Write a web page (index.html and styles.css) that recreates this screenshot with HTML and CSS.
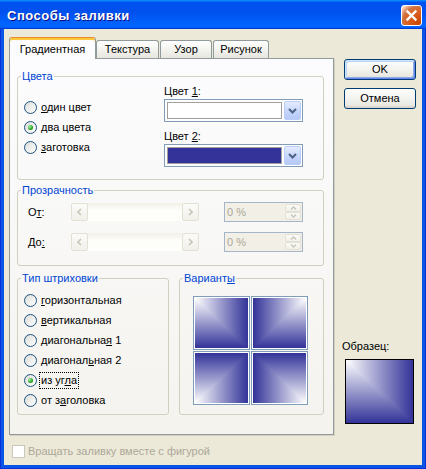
FILE: index.html
```html
<!DOCTYPE html>
<html lang="ru">
<head>
<meta charset="utf-8">
<title>Способы заливки</title>
<link rel="stylesheet" href="styles.css">
</head>
<body>
<div class="window">
  <div class="titlebar">
    <span class="title">Способы заливки</span>
    <span class="close"><svg width="21" height="21" viewBox="0 0 21 21"><path d="M6.5 6.5L14.5 14.5M14.5 6.5L6.5 14.5" stroke="#fff" stroke-width="2.4" stroke-linecap="square"/></svg></span>
  </div>
  <div class="frame">
    <div class="client">
      <div class="main">
        <div class="left">
          <div class="tabs">
            <div class="tab sel t1">Градиентная</div>
            <div class="tab t2">Текстура</div>
            <div class="tab t3">Узор</div>
            <div class="tab t4">Рисунок</div>
          </div>
          <div class="panel">
            <fieldset class="group g-colors">
              <legend>Цвета</legend>
              <div class="colors-body">
                <div class="radios">
                  <div class="radio-row r1"><span class="radio"></span><span class="lbl"><u>о</u>дин цвет</span></div>
                  <div class="radio-row"><span class="radio on"></span><span class="lbl"><u>д</u>ва цвета</span></div>
                  <div class="radio-row"><span class="radio"></span><span class="lbl"><u>з</u>аготовка</span></div>
                </div>
                <div class="pickers">
                  <div class="plabel">Цвет <u>1</u>:</div>
                  <div class="combo"><span class="swatch white"></span><span class="drop"><svg width="9" height="6" viewBox="0 0 9 6"><path d="M1 1L4.5 4.5L8 1" fill="none" stroke="#4D6185" stroke-width="2"/></svg></span></div>
                  <div class="plabel second">Цвет <u>2</u>:</div>
                  <div class="combo"><span class="swatch blue"></span><span class="drop"><svg width="9" height="6" viewBox="0 0 9 6"><path d="M1 1L4.5 4.5L8 1" fill="none" stroke="#4D6185" stroke-width="2"/></svg></span></div>
                </div>
              </div>
            </fieldset>
            <fieldset class="group g-trans">
              <legend>Прозрачность</legend>
              <div class="trow">
                <span class="tlabel">О<u>т</u>:</span>
                <div class="hscroll">
                  <span class="sbtn"><svg width="5" height="8" viewBox="0 0 5 8"><path d="M4 1L1 4L4 7" fill="none" stroke="#C8C6B8" stroke-width="1.6"/></svg></span>
                  <span class="strack"></span>
                  <span class="sbtn"><svg width="5" height="8" viewBox="0 0 5 8"><path d="M1 1L4 4L1 7" fill="none" stroke="#C8C6B8" stroke-width="1.6"/></svg></span>
                </div>
                <div class="spin">
                  <span class="spin-val">0 %</span>
                  <span class="spin-btns">
                    <span><svg width="7" height="4" viewBox="0 0 7 4"><path d="M1 3.5L3.5 1L6 3.5" fill="none" stroke="#C8C6B8" stroke-width="1.4"/></svg></span>
                    <span><svg width="7" height="4" viewBox="0 0 7 4"><path d="M1 0.5L3.5 3L6 0.5" fill="none" stroke="#C8C6B8" stroke-width="1.4"/></svg></span>
                  </span>
                </div>
              </div>
              <div class="trow second">
                <span class="tlabel">До<u>:</u></span>
                <div class="hscroll">
                  <span class="sbtn"><svg width="5" height="8" viewBox="0 0 5 8"><path d="M4 1L1 4L4 7" fill="none" stroke="#C8C6B8" stroke-width="1.6"/></svg></span>
                  <span class="strack"></span>
                  <span class="sbtn"><svg width="5" height="8" viewBox="0 0 5 8"><path d="M1 1L4 4L1 7" fill="none" stroke="#C8C6B8" stroke-width="1.6"/></svg></span>
                </div>
                <div class="spin">
                  <span class="spin-val">0 %</span>
                  <span class="spin-btns">
                    <span><svg width="7" height="4" viewBox="0 0 7 4"><path d="M1 3.5L3.5 1L6 3.5" fill="none" stroke="#C8C6B8" stroke-width="1.4"/></svg></span>
                    <span><svg width="7" height="4" viewBox="0 0 7 4"><path d="M1 0.5L3.5 3L6 0.5" fill="none" stroke="#C8C6B8" stroke-width="1.4"/></svg></span>
                  </span>
                </div>
              </div>
            </fieldset>
            <div class="bottom-row">
              <fieldset class="group g-hatch">
                <legend>Тип штриховки</legend>
                <div class="radio-row"><span class="radio"></span><span class="lbl"><u>г</u>оризонтальная</span></div>
                <div class="radio-row"><span class="radio"></span><span class="lbl"><u>в</u>ертикальная</span></div>
                <div class="radio-row"><span class="radio"></span><span class="lbl">диагональна<u>я</u> 1</span></div>
                <div class="radio-row"><span class="radio"></span><span class="lbl">диагонал<u>ь</u>ная 2</span></div>
                <div class="radio-row"><span class="radio on"></span><span class="lbl focus">из уг<u>л</u>а</span></div>
                <div class="radio-row"><span class="radio"></span><span class="lbl">от з<u>а</u>головка</span></div>
              </fieldset>
              <fieldset class="group g-var">
                <legend>Вариант<u>ы</u></legend>
                <div class="tiles">
                  <div class="tile"><svg width="53" height="50" viewBox="0 0 1 1" preserveAspectRatio="none"><defs><linearGradient id="h1" x1="0" y1="0" x2="1" y2="0"><stop offset="0" stop-color="#fff"/><stop offset="1" stop-color="#333399"/></linearGradient><linearGradient id="v1" x1="0" y1="0" x2="0" y2="1"><stop offset="0" stop-color="#fff"/><stop offset="1" stop-color="#333399"/></linearGradient></defs><rect width="1" height="1" fill="url(#h1)"/><polygon points="0,0 1,1 0,1" fill="url(#v1)"/></svg></div>
                  <div class="tile"><svg width="53" height="50" viewBox="0 0 1 1" preserveAspectRatio="none"><defs><linearGradient id="h2" x1="0" y1="0" x2="1" y2="0"><stop offset="0" stop-color="#333399"/><stop offset="1" stop-color="#fff"/></linearGradient><linearGradient id="v2" x1="0" y1="0" x2="0" y2="1"><stop offset="0" stop-color="#fff"/><stop offset="1" stop-color="#333399"/></linearGradient></defs><rect width="1" height="1" fill="url(#v2)"/><polygon points="0,0 1,0 0,1" fill="url(#h2)"/></svg></div>
                  <div class="tile"><svg width="53" height="50" viewBox="0 0 1 1" preserveAspectRatio="none"><defs><linearGradient id="h3" x1="0" y1="0" x2="1" y2="0"><stop offset="0" stop-color="#fff"/><stop offset="1" stop-color="#333399"/></linearGradient><linearGradient id="v3" x1="0" y1="0" x2="0" y2="1"><stop offset="0" stop-color="#333399"/><stop offset="1" stop-color="#fff"/></linearGradient></defs><rect width="1" height="1" fill="url(#h3)"/><polygon points="0,0 1,0 0,1" fill="url(#v3)"/></svg></div>
                  <div class="tile"><svg width="53" height="50" viewBox="0 0 1 1" preserveAspectRatio="none"><defs><linearGradient id="h4" x1="0" y1="0" x2="1" y2="0"><stop offset="0" stop-color="#333399"/><stop offset="1" stop-color="#fff"/></linearGradient><linearGradient id="v4" x1="0" y1="0" x2="0" y2="1"><stop offset="0" stop-color="#333399"/><stop offset="1" stop-color="#fff"/></linearGradient></defs><rect width="1" height="1" fill="url(#v4)"/><polygon points="0,0 1,1 0,1" fill="url(#h4)"/></svg></div>
                </div>
              </fieldset>
            </div>
          </div>
        </div>
        <div class="right">
          <button class="btn default">OK</button>
          <button class="btn">Отмена</button>
          <div class="sample-label">Образец:</div>
          <div class="sample"><svg width="67" height="63" viewBox="0 0 1 1" preserveAspectRatio="none"><defs><linearGradient id="h5" x1="0" y1="0" x2="1" y2="0"><stop offset="0" stop-color="#fff"/><stop offset="1" stop-color="#333399"/></linearGradient><linearGradient id="v5" x1="0" y1="0" x2="0" y2="1"><stop offset="0" stop-color="#fff"/><stop offset="1" stop-color="#333399"/></linearGradient></defs><rect width="1" height="1" fill="url(#h5)"/><polygon points="0,0 1,1 0,1" fill="url(#v5)"/></svg></div>
        </div>
      </div>
      <div class="rotate"><span class="check"></span><span class="rotate-text">Вращать заливку вместе с фигурой</span></div>
    </div>
  </div>
</div>
</body>
</html>
```

FILE: styles.css
```css
* { box-sizing: border-box; }
html, body { margin: 0; padding: 0; }
body {
  font-family: "Liberation Sans", Arial, sans-serif;
  font-size: 11px;
  color: #000;
  background: #fff;
}
u { text-decoration: underline; text-underline-offset: 1px; }

.window {
  width: 426px;
  height: 469px;
  display: flex;
  flex-direction: column;
}

.titlebar {
  height: 29px;
  flex: none;
  display: flex;
  align-items: center;
  justify-content: space-between;
  padding: 1px 4px 0 7px;
  background: linear-gradient(180deg, #0997ff, #0053ee 8%, #0050ee 40%, #06f 88%, #06f 93%, #005bff 95%, #003dd7 96%, #003dd7);
}
.title {
  color: #fff;
  font-weight: bold;
  font-size: 13px;
  letter-spacing: 0.5px;
  padding-top: 1px;
  text-shadow: 1px 1px 0 #0f1089;
}
.close {
  width: 21px;
  height: 21px;
  border: 1px solid #fff;
  border-radius: 3px;
  background: radial-gradient(circle at 90% 90%, #cc4600 0, #dc6527 55%, #cd7546 70%, #ffccb2 90%, #fff 100%);
  display: flex;
  align-items: center;
  justify-content: center;
}
.close svg { display: block; margin: -1px; }

.frame {
  flex: 1;
  display: flex;
  padding: 0 4px 4px 4px;
  background: #0a55e6;
  box-shadow: inset 1px 0 0 #0831d9, inset -1px 0 0 #0831d9, inset 0 -1px 0 #0831d9;
}
.client {
  flex: 1;
  background: #ece9d8;
  padding: 8px 0 0 5px;
  display: flex;
  flex-direction: column;
}
.main { display: flex; }
.left { width: 325px; flex: none; }

/* tabs */
.tabs {
  display: flex;
  align-items: flex-end;
  height: 21px;
  position: relative;
  z-index: 1;
}
.tab {
  height: 18px;
  border: 1px solid #919b9c;
  border-bottom: 0;
  border-radius: 3px 3px 0 0;
  background: linear-gradient(#ffffff, #f3f3ef 50%, #e6e5de);
  text-align: center;
  line-height: 17px;
  flex: none;
}
.tab.sel {
  height: 22px;
  margin-bottom: -1px;
  background: #fcfcfe;
  border-top-color: #e68b2c;
  box-shadow: inset 0 2px 0 #ffc83c;
  padding-top: 3px;
}
.t1 { width: 87px; }
.t2 { width: 63px; }
.t3 { width: 52px; margin-left: 1px; }
.t4 { width: 56px; margin-left: 1px; }

.panel {
  width: 325px;
  height: 377px;
  border: 1px solid #919b9c;
  background: linear-gradient(#fcfcfe, #f4f3ee);
  box-shadow: 1px 1px 0 #d3d0c1;
  padding: 10px 9px 0 7px;
}

/* group boxes */
.group {
  margin: 0;
  border: 1px solid #d0d0bf;
  border-radius: 3px;
  min-width: 0;
}
.group legend {
  padding: 0 1px;
  line-height: 14px;
  color: #0046d5;
}

.g-colors { height: 111px; padding: 0 6px; }
.g-colors legend { margin-left: -3px; }
.colors-body { display: flex; }
.radios { width: 140px; padding-top: 14px; }

.radio-row {
  display: flex;
  align-items: center;
  height: 20px;
}
.radio {
  width: 13px;
  height: 13px;
  flex: none;
  border-radius: 50%;
  border: 1px solid #1c5180;
  background: linear-gradient(135deg, #dcdcd7, #ffffff);
  display: flex;
  align-items: center;
  justify-content: center;
}
.radio.on::after {
  content: "";
  width: 5px;
  height: 5px;
  border-radius: 50%;
  background: radial-gradient(circle at 35% 35%, #a6f0a4, #21a121 60%, #1a8c1a);
}
.lbl { margin-left: 4px; line-height: 13px; white-space: nowrap; }
.lbl.focus {
  border: 1px dotted #000;
  padding: 1px;
  margin-left: 2px;
}

.pickers { width: 139px; padding-top: 1px; }
.plabel { line-height: 14px; }
.plabel.second { margin-top: 7px; }
.combo {
  margin-top: 1px;
  height: 23px;
  border: 1px solid #7f9db9;
  background: #fff;
  padding: 1px;
  display: flex;
}
.swatch {
  flex: 1;
  margin: 1px;
  border: 1px solid #a0a0a0;
}
.swatch.white { background: #fff; }
.swatch.blue { background: #333399; }
.drop {
  width: 17px;
  flex: none;
  margin-left: 1px;
  border: 1px solid #b9cdf6;
  border-radius: 2px;
  background: linear-gradient(#e3ebfe, #c3d4fb 60%, #b6c9f6);
  display: flex;
  align-items: center;
  justify-content: center;
}
.drop svg { display: block; }

/* transparency */
.g-trans { margin-top: 3px; height: 83px; padding: 5px 10px 0; }
.g-trans legend { margin-left: -7px; }
.trow { display: flex; align-items: center; height: 20px; }
.trow.second { margin-top: 10px; }
.tlabel { width: 43px; flex: none; }
.hscroll {
  width: 128px;
  height: 18px;
  flex: none;
  display: flex;
  background: linear-gradient(#f2f0e8, #fdfdfa 40%, #fefefb);
}
.sbtn {
  width: 17px;
  height: 18px;
  border: 1px solid #e3e1d6;
  border-radius: 2px;
  background: linear-gradient(#fbfbf8, #f1f0ea);
  display: flex;
  align-items: center;
  justify-content: center;
}
.sbtn svg, .spin-btns svg { display: block; }
.strack { flex: 1; }
.spin {
  margin-left: 25px;
  width: 79px;
  height: 20px;
  flex: none;
  border: 1px solid #a5b6cb;
  background: #f1efe6;
  display: flex;
}
.spin-val { flex: 1; color: #aca899; padding-left: 2px; line-height: 18px; }
.spin-btns {
  width: 17px;
  display: flex;
  flex-direction: column;
  padding: 1px 1px 1px 0;
}
.spin-btns span {
  flex: 1;
  border: 1px solid #e3e1d6;
  border-radius: 2px;
  background: linear-gradient(#fbfbf8, #f1f0ea);
  display: flex;
  align-items: center;
  justify-content: center;
}

/* bottom groups */
.bottom-row { display: flex; margin-top: 5px; gap: 10px; }
.g-hatch { width: 152px; height: 144px; padding: 5px 6px 0; }
.g-hatch legend { margin-left: -3px; }
.g-var { width: 145px; height: 144px; padding: 11px 13px 0; }
.g-var legend { margin-left: -10px; }
.tiles {
  display: grid;
  grid-template-columns: 57px 57px;
  grid-template-rows: 54px 54px;
  gap: 1px;
}
.tile {
  border: 1px solid #7f9db9;
  padding: 1px;
  background: #fff;
}
.tile svg, .sample svg { display: block; }

/* right column */
.right {
  margin-left: 10px;
  width: 72px;
  flex: none;
  padding-top: 22px;
  display: flex;
  flex-direction: column;
}
.btn {
  width: 72px;
  height: 21px;
  border: 1px solid #003c74;
  border-radius: 3px;
  background: linear-gradient(#ffffff, #f3f3ef 50%, #e9e8e1 85%, #d6d0c5);
  font: inherit;
  color: #000;
  padding: 0;
  line-height: 19px;
}
.btn.default {
  box-shadow: inset 1px 1px 0 #cee7ff, inset -1px -1px 0 #6982ee, inset 2px 2px 0 #bcd4f6, inset -2px -2px 0 #89ade4;
}
.btn + .btn { margin-top: 8px; }
.sample-label { margin-top: 230px; margin-left: -2px; line-height: 14px; white-space: nowrap; }
.sample {
  margin-top: 6px;
  margin-left: 1px;
  width: 69px;
  height: 65px;
  border: 1px solid #000;
}

/* bottom checkbox */
.rotate {
  display: flex;
  align-items: center;
  margin-top: 10px;
  margin-left: 3px;
  height: 13px;
}
.check {
  width: 13px;
  height: 13px;
  flex: none;
  border: 1px solid #cac8bb;
  background: #fff;
}
.rotate-text { margin-left: 3px; color: #aca899; line-height: 13px; }
```
